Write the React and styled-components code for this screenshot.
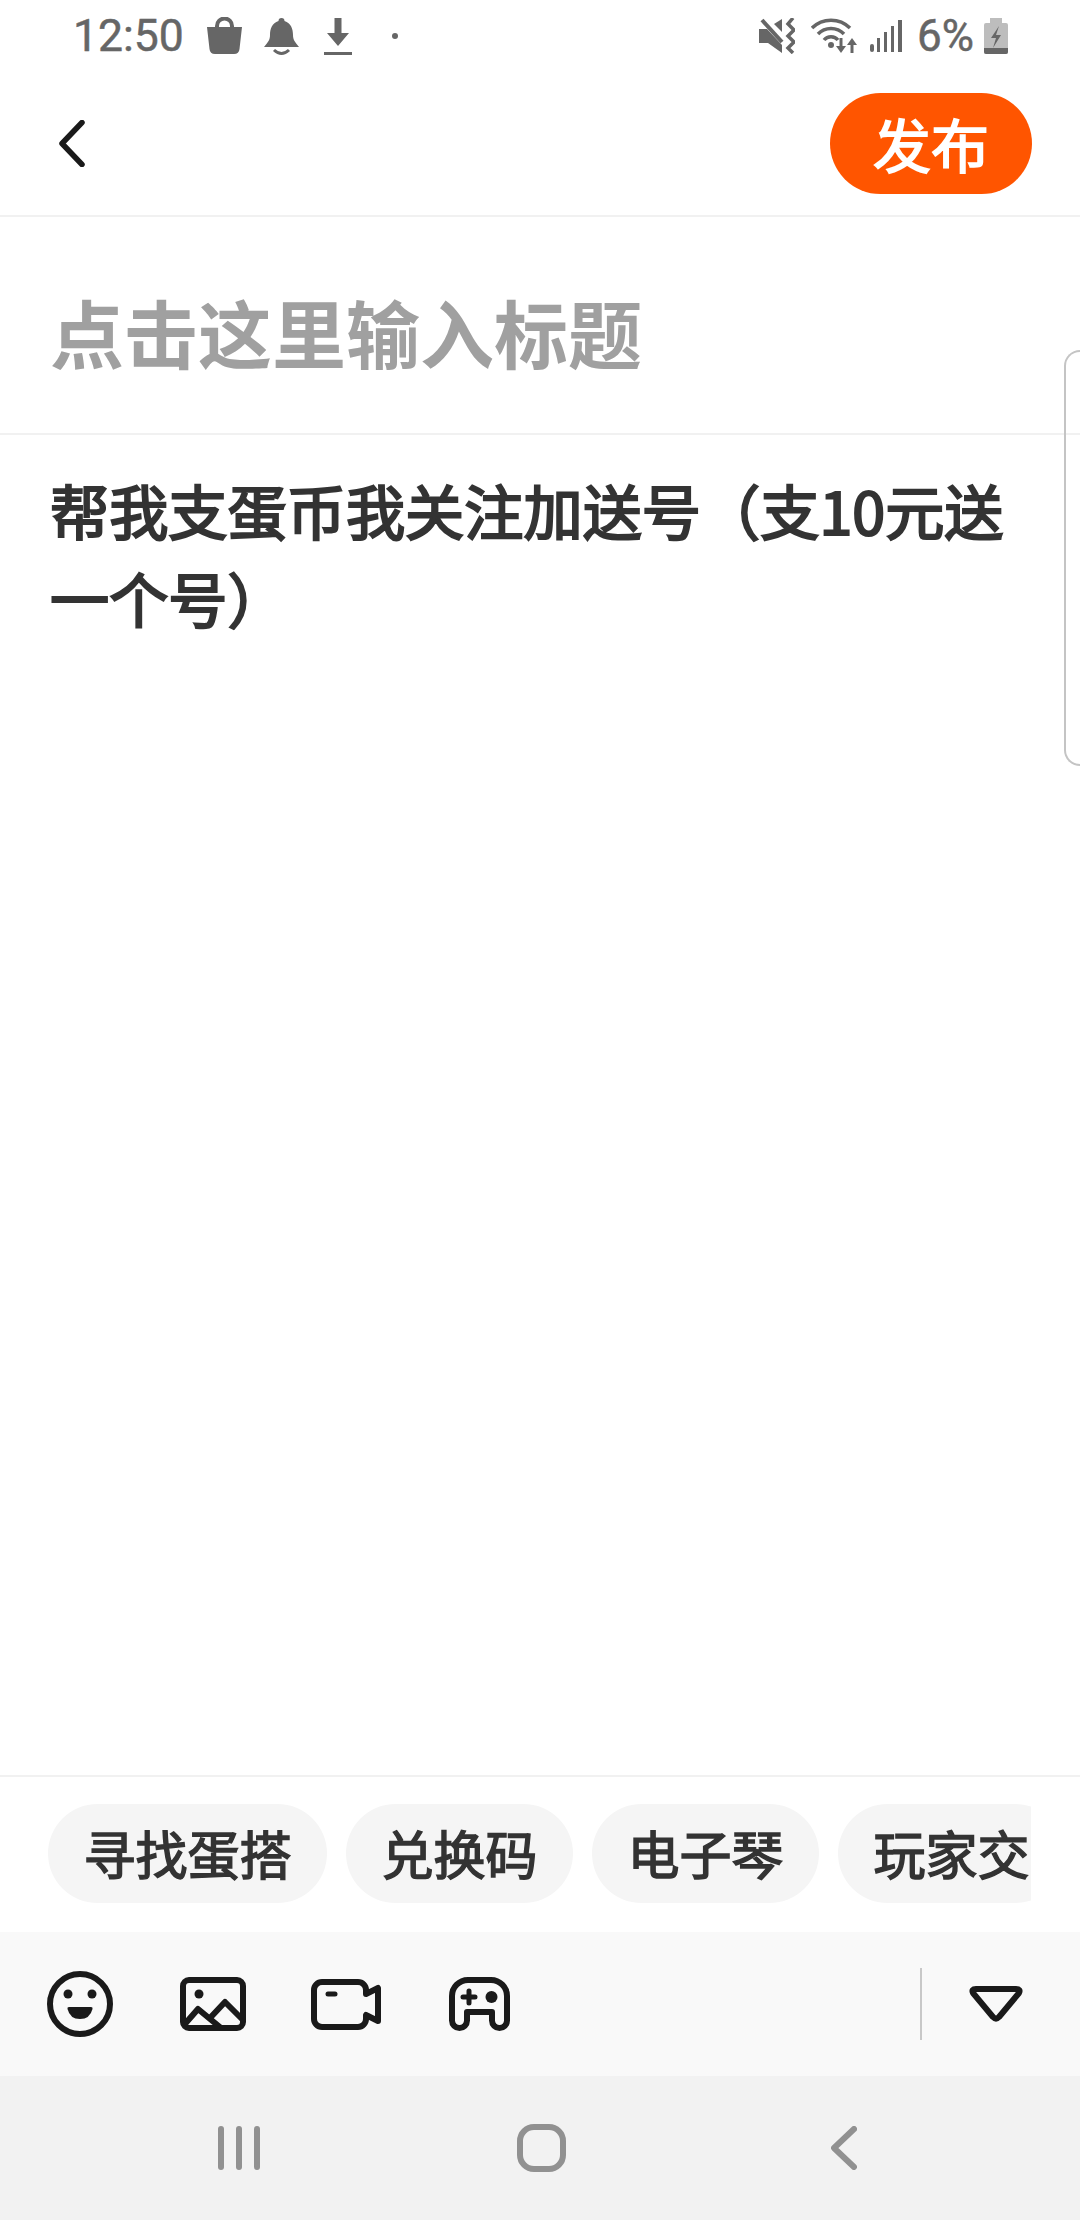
import React from 'react'
import styled, { createGlobalStyle } from 'styled-components'

const cjk = `"Noto Sans CJK SC", "Noto Sans", sans-serif`

const GlobalStyle = createGlobalStyle`
    html, body {
        margin: 0;
        padding: 0;
        background: #ffffff;
    }
`
const Page = styled.div`
    position: relative;
    width: 1080px;
    height: 2220px;
    display: flex;
    flex-direction: column;
    overflow: hidden;
    background: #ffffff;
    font-family: ${cjk};
`
const StatusBar = styled.div`
    height: 72px;
    flex-shrink: 0;
    display: flex;
    align-items: center;
    justify-content: space-between;
    padding: 0 72px 0 73px;
    box-sizing: border-box;
    color: #666666;
`
const StatusGroup = styled.div`
    display: flex;
    align-items: center;
`
const StatusText = styled.span`
    font-family: Roboto, sans-serif;
    font-size: ${props => props.$size}px;
    -webkit-text-stroke: 0.5px #666666;
    line-height: 72px;
    margin-left: ${props => props.$left || 0}px;
`
const StatusIcon = styled.svg`
    display: block;
    flex-shrink: 0;
    margin-left: ${props => props.$left || 0}px;
`
const Header = styled.div`
    height: 145px;
    flex-shrink: 0;
    display: flex;
    align-items: center;
    justify-content: space-between;
    padding: 0 48px 0 59px;
    box-sizing: border-box;
    border-bottom: 2px solid #f1f1f1;
`
const PublishButton = styled.button`
    width: 202px;
    height: 101px;
    border: none;
    padding: 0;
    border-radius: 51px;
    background: #ff5500;
    color: #ffffff;
    font-family: ${cjk};
    font-size: 58px;
    font-weight: 400;
    -webkit-text-stroke: 1.6px #ffffff;
    line-height: 101px;
`
const TitleBlock = styled.div`
    height: 218px;
    flex-shrink: 0;
    box-sizing: border-box;
    padding: 59px 50px 0;
    border-bottom: 2px solid #f1f1f1;
    color: #a0a0a0;
    font-size: 74px;
    font-weight: 700;
    line-height: 110px;
`
const Content = styled.div`
    flex: 1;
    padding: 30px 30px 0 50px;
    color: #333333;
    font-size: 59.2px;
    font-weight: 400;
    -webkit-text-stroke: 2.2px #333333;
    line-height: 88px;
`
const TagBar = styled.div`
    height: 157px;
    flex-shrink: 0;
    box-sizing: border-box;
    border-top: 2px solid #f1f1f1;
    padding: 27px 49px 0 48px;
`
const TagScroller = styled.div`
    display: flex;
    gap: 19px;
    overflow: hidden;
`
const Tag = styled.div`
    flex-shrink: 0;
    height: 99px;
    padding: 0 35.5px;
    border-radius: 50px;
    background: #f5f5f5;
    color: #333333;
    font-size: 52px;
    font-weight: 400;
    -webkit-text-stroke: 1.5px #333333;
    line-height: 97px;
`
const Toolbar = styled.div`
    height: 144px;
    flex-shrink: 0;
    display: flex;
    align-items: center;
    justify-content: space-between;
    padding: 0 57px 0 40px;
    box-sizing: border-box;
    background: #f9f9f9;
`
const ToolGroup = styled.div`
    display: flex;
    align-items: center;
    gap: 53px;
`
const ToolSlot = styled.div`
    width: 80px;
    height: 80px;
    display: flex;
    align-items: center;
    justify-content: center;
`
const ToolDivider = styled.div`
    width: 2px;
    height: 72px;
    margin-right: 47px;
    background: #c8c8c8;
`
const ToolRight = styled.div`
    display: flex;
    align-items: center;
`
const NavBar = styled.div`
    height: 144px;
    flex-shrink: 0;
    display: grid;
    grid-template-columns: 218px 42px 257px 49px 265px 26px;
    align-items: center;
    background: #f2f2f2;
`
const SideHandle = styled.div`
    position: absolute;
    top: 350px;
    right: 0;
    width: 16px;
    height: 416px;
    box-sizing: border-box;
    border: 2px solid #c4c4c4;
    border-right: none;
    border-radius: 16px 0 0 16px;
`

const BackIcon = () => (
    <svg width="26" height="47" viewBox="0 0 26 47" style={{ display: 'block' }}>
        <path d="M23 2.5 L3 23.5 L23 44.5" fill="none" stroke="#1a1a1a" strokeWidth="5.5" strokeLinecap="round" strokeLinejoin="round" />
    </svg>
)

const tags = ['寻找蛋搭', '兑换码', '电子琴', '玩家交']

export default function App() {
    return (
        <Page>
            <GlobalStyle />
            <StatusBar>
                <StatusGroup>
                    <StatusText $size={44.5}>12:50</StatusText>
                    <StatusIcon $left={23} width="35" height="38" viewBox="0 0 35 38" fill="#666666">
                        <path d="M0 10 H35 L32.5 32 Q32 37 27 37 H8 Q3 37 2.5 32 Z" />
                        <path d="M10 12 V9 a7.5 7.5 0 0 1 15 0 V12" fill="none" stroke="#666666" strokeWidth="4" />
                    </StatusIcon>
                    <StatusIcon $left={22} width="35" height="39" viewBox="0 0 35 39" fill="#666666">
                        <path d="M14.5 4 a3 3 0 0 1 6 0 C27 6 29 12 29 18 C29 23 31 25 35 30 H0 C4 25 6 23 6 18 C6 12 8 6 14.5 4 Z" />
                        <path d="M10 33 Q17.5 40 25 33" fill="none" stroke="#666666" strokeWidth="3" />
                    </StatusIcon>
                    <StatusIcon $left={25} width="28" height="37" viewBox="0 0 28 37" fill="#666666">
                        <path d="M10.5 0 H17.5 V15 H25 L14 28 L3 15 H10.5 Z" />
                        <rect x="0" y="34" width="28" height="3" />
                    </StatusIcon>
                    <StatusIcon $left={40} width="6" height="6" viewBox="0 0 6 6" fill="#666666">
                        <circle cx="3" cy="3" r="3" />
                    </StatusIcon>
                </StatusGroup>
                <StatusGroup>
                    <StatusIcon width="36" height="36" viewBox="0 0 36 36" fill="#666666">
                        <path d="M0 11 H8 L23 27 V35 L9 25 H0 Z" />
                        <path d="M3 2 L23 24" fill="none" stroke="#666666" strokeWidth="4" />
                        <path d="M23 1 V14 L15 6 Z" />
                        <path d="M34 0 L29 6 L35 12 L29 18 L35 24 L29 30 L34 35" fill="none" stroke="#666666" strokeWidth="3.5" />
                    </StatusIcon>
                    <StatusIcon $left={16} width="46" height="36" viewBox="0 0 46 36" fill="none" stroke="#666666">
                        <path d="M1 10 A27 27 0 0 1 39 10" strokeWidth="3.5" />
                        <path d="M7 16 A18 18 0 0 1 33 16" strokeWidth="3.5" />
                        <path d="M13 22 A9 9 0 0 1 27 22" strokeWidth="3.5" />
                        <circle cx="20" cy="27" r="3" fill="#666666" stroke="none" />
                        <path d="M30 20 V30" strokeWidth="3" />
                        <path d="M25 28 H35 L30 35 Z" fill="#666666" stroke="none" />
                        <path d="M41 35 V25" strokeWidth="3" />
                        <path d="M36 27 H46 L41 20 Z" fill="#666666" stroke="none" />
                    </StatusIcon>
                    <StatusIcon $left={13} width="32" height="32" viewBox="0 0 32 32" fill="#666666">
                        <rect x="0" y="24" width="4" height="8" rx="2" />
                        <rect x="7" y="18" width="3" height="14" />
                        <rect x="14" y="12" width="3" height="20" />
                        <rect x="21" y="6" width="3" height="26" />
                        <rect x="28" y="0" width="4" height="32" />
                    </StatusIcon>
                    <StatusText $size={44} $left={15}>6%</StatusText>
                    <StatusIcon $left={10} width="24" height="36" viewBox="0 0 24 36">
                        <rect x="6" y="0" width="12" height="5" fill="#bdbdbd" />
                        <rect x="0" y="5" width="24" height="31" rx="2" fill="#bdbdbd" />
                        <path d="M0 30 H24 V34 Q24 36 22 36 H2 Q0 36 0 34 Z" fill="#666666" />
                        <path d="M15 8 L7 20 H12 L9 30 L17 17 H12 Z" fill="#666666" />
                    </StatusIcon>
                </StatusGroup>
            </StatusBar>
            <Header>
                <BackIcon />
                <PublishButton>发布</PublishButton>
            </Header>
            <TitleBlock>点击这里输入标题</TitleBlock>
            <Content>帮我支蛋币我关注加送号（支10元送一个号）</Content>
            <TagBar>
                <TagScroller>
                    {tags.map(tag => <Tag key={tag}>{tag}</Tag>)}
                </TagScroller>
            </TagBar>
            <Toolbar>
                <ToolGroup>
                    <ToolSlot>
                        <svg width="66" height="66" viewBox="0 0 66 66">
                            <circle cx="33" cy="33" r="30" fill="none" stroke="#1a1a1a" strokeWidth="6" />
                            <circle cx="21" cy="23" r="4.5" fill="#1a1a1a" />
                            <circle cx="45" cy="23" r="4.5" fill="#1a1a1a" />
                            <path d="M22 36 H44 Q46 36 45.5 38 Q43 48 33 48 Q23 48 20.5 38 Q20 36 22 36 Z" fill="#1a1a1a" />
                        </svg>
                    </ToolSlot>
                    <ToolSlot>
                        <svg width="66" height="54" viewBox="0 0 66 54" fill="none" stroke="#1a1a1a" strokeWidth="6" strokeLinejoin="round">
                            <rect x="3" y="3" width="60" height="48" rx="6" />
                            <circle cx="19" cy="17" r="4.5" fill="#1a1a1a" stroke="none" />
                            <path d="M4 48 L18 32 L41 51" />
                            <path d="M30 41 L45 25 L62 42" />
                        </svg>
                    </ToolSlot>
                    <ToolSlot>
                        <svg width="70" height="51" viewBox="0 0 70 51" fill="none" stroke="#1a1a1a" strokeWidth="6" strokeLinejoin="round">
                            <path d="M11 3 H47 a8 8 0 0 1 8 8 V15 L67 9 V42 L55 36 V40 a8 8 0 0 1 -8 8 H11 a8 8 0 0 1 -8 -8 V11 a8 8 0 0 1 8 -8 Z" />
                            <path d="M17 15 H24" strokeWidth="5" strokeLinecap="round" />
                        </svg>
                    </ToolSlot>
                    <ToolSlot>
                        <svg width="61" height="54" viewBox="0 0 61 54" fill="none" stroke="#1a1a1a" strokeWidth="6" strokeLinejoin="round">
                            <path d="M19 3 H42 A16 16 0 0 1 58 19 V43.5 A7.5 7.5 0 0 1 43 43.5 V35 H18 V43.5 A7.5 7.5 0 0 1 3 43.5 V19 A16 16 0 0 1 19 3 Z" />
                            <path d="M14 20 H26 M20 14 V26" strokeWidth="5" strokeLinecap="round" />
                            <circle cx="42.5" cy="20" r="6" fill="#1a1a1a" stroke="none" />
                        </svg>
                    </ToolSlot>
                </ToolGroup>
                <ToolRight>
                    <ToolDivider />
                    <svg width="54" height="38" viewBox="0 0 54 38" fill="none" stroke="#1a1a1a" strokeWidth="6" strokeLinejoin="round">
                        <path d="M7 4 H47 Q52 4 50 8 L30 32 Q27 35 24 32 L4 8 Q2 4 7 4 Z" />
                    </svg>
                </ToolRight>
            </Toolbar>
            <NavBar>
                <span />
                <svg width="42" height="44" viewBox="0 0 42 44" fill="#919191">
                    <rect x="0" y="0" width="6" height="44" rx="3" />
                    <rect x="18" y="0" width="6" height="44" rx="3" />
                    <rect x="36" y="0" width="6" height="44" rx="3" />
                </svg>
                <span />
                <svg width="49" height="48" viewBox="0 0 49 48" fill="none" stroke="#919191" strokeWidth="6">
                    <rect x="3" y="3" width="43" height="42" rx="14" />
                </svg>
                <span />
                <svg width="26" height="44" viewBox="0 0 26 44" fill="none" stroke="#919191" strokeWidth="6" strokeLinecap="round" strokeLinejoin="round">
                    <path d="M23 3 L3 22 L23 41" />
                </svg>
            </NavBar>
            <SideHandle />
        </Page>
    )
}
